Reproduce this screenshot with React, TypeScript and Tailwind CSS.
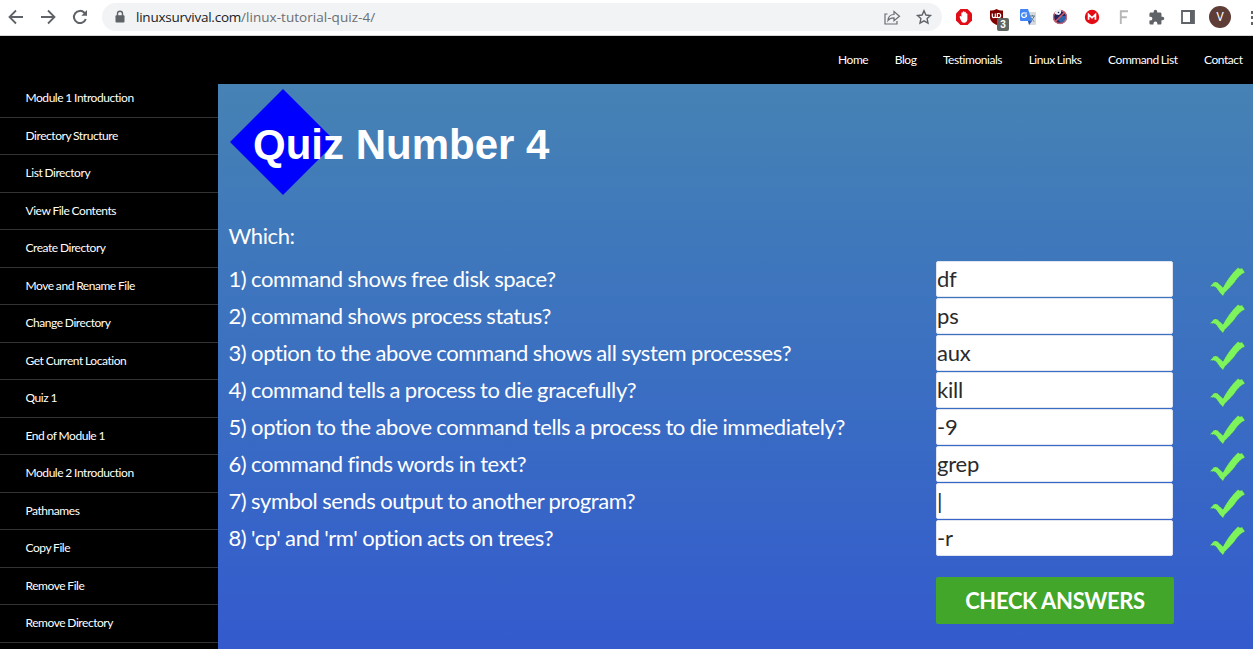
import React from "react";

const modules = [
  "Module 1 Introduction", "Directory Structure", "List Directory", "View File Contents",
  "Create Directory", "Move and Rename File", "Change Directory", "Get Current Location",
  "Quiz 1", "End of Module 1", "Module 2 Introduction", "Pathnames", "Copy File",
  "Remove File", "Remove Directory",
];

const links = ["Home", "Blog", "Testimonials", "Linux Links", "Command List", "Contact"];

const questions = [
  { text: "1) command shows free disk space?", answer: "df" },
  { text: "2) command shows process status?", answer: "ps" },
  { text: "3) option to the above command shows all system processes?", answer: "aux" },
  { text: "4) command tells a process to die gracefully?", answer: "kill" },
  { text: "5) option to the above command tells a process to die immediately?", answer: "-9" },
  { text: "6) command finds words in text?", answer: "grep" },
  { text: "7) symbol sends output to another program?", answer: "|" },
  { text: "8) 'cp' and 'rm' option acts on trees?", answer: "-r" },
];

function Slot({ children }: { children: React.ReactNode }) {
  return <div className="flex h-[34px] w-8 shrink-0 items-center justify-center">{children}</div>;
}

function Extensions() {
  return (
    <div className="ml-[6px] flex">
      <Slot>
        <svg width="18" height="18" viewBox="0 0 18 18">
          <path d="M5.500 1h7L17 5.500v7L12.500 17h-7L1 12.500v-7z" fill="#e10d17" />
          <path d="M4.900 8.200c.7-.3 1.200.2 1.500.8V5c0-1 1.400-1 1.400 0V3.900c0-1 1.600-1 1.600 0v.7c0-1 1.500-1 1.500 0V6c0-1 1.500-1 1.500 0v5c0 2-1 3.700-3.200 3.700-2.500 0-3.400-2-4.500-5.500-.1-.5-.1-.8.200-1z" fill="#fff" />
        </svg>
      </Slot>
      <Slot>
        <div className="relative left-px h-[18px] w-[18px]">
          <svg width="18" height="18" viewBox="0 0 18 18">
            <path d="M8.500 1c2 1 4 1.500 6.500 1.500V9c0 4-3 6-6.500 8-3.500-2-6.500-4-6.500-8V2.500C4.500 2.500 6.500 2 8.500 1z" fill="#800000" />
            <path d="M4.300 5.500v2.700c0 1.800 3 1.800 3 0V5.500M9.400 5.500v4h1.300c2.700 0 2.700-4 0-4zM7.300 9.500h2" fill="none" stroke="#fff" strokeWidth="1.200" />
          </svg>
          <span className="absolute top-[10px] left-[9px] flex h-[13px] w-[12px] items-center justify-center rounded-[2px] bg-[#5f6662] font-['Liberation_Sans'] text-[10px] font-bold text-white">3</span>
        </div>
      </Slot>
      <Slot>
        <svg width="18" height="18" viewBox="0 0 18 18">
          <path d="M7 4h9q1 0 1 1v11q0 1-1 1h-6z" fill="#d5d9e0" />
          <path d="M2 1h7l4 12H2q-1 0-1-1V2q0-1 1-1z" fill="#4285f4" />
          <path d="M10 17l3-4H9z" fill="#2456b8" />
          <path d="M8 5H5.800a2.300 2.300 0 1 0 .2 4.200Q7.800 8.600 7.600 7H5.800" fill="none" stroke="#fff" strokeWidth="1.200" />
          <path d="M11 8h5M13.500 7v1M15.200 8q-.8 3-3.400 4.800M12 9.500q1 2.500 3.300 4" fill="none" stroke="#607d8b" />
        </svg>
      </Slot>
      <Slot>
        <svg width="18" height="18" viewBox="0 0 18 18">
          <circle cx="9" cy="9" r="7" fill="#20245f" />
          <path d="M9 8l6 0-1 5-4 2-3-3z" fill="#2b64ad" />
          <circle cx="9" cy="9" r="6.500" fill="none" stroke="#cf6673" strokeWidth="1.300" />
          <path d="M13.800 4.200l-9.600 9.600" stroke="#d95761" strokeWidth="1.600" />
          <path d="M3.500 5l2-3 4.500 0 0 3-2 2-3-.5z" fill="#eef2f8" />
          <circle cx="7.500" cy="4.500" r=".8" fill="#252550" />
        </svg>
      </Slot>
      <Slot>
        <svg width="18" height="18" viewBox="0 0 18 18">
          <circle cx="9" cy="9" r="7.200" fill="#e50b14" />
          <path d="M5.600 11.800V6.500L9 9.800l3.400-3.300v5.300" fill="none" stroke="#fff" strokeWidth="1.700" />
        </svg>
      </Slot>
      <Slot>
        <svg width="18" height="18" viewBox="0 0 18 18">
          <path d="M5.800 16V3.200H13M5.800 9.300h6" fill="none" stroke="#b7b7b7" strokeWidth="1.900" />
        </svg>
      </Slot>
      <Slot>
        <svg width="17" height="17" viewBox="0 0 24 24" fill="#5f6368">
          <path d="M20.500 11H19V7c0-1.100-.9-2-2-2h-4V3.500a2.500 2.500 0 0 0-5 0V5H4c-1.100 0-2 .9-2 2v3.800h1.500a2.700 2.700 0 0 1 0 5.400H2V20c0 1.100.9 2 2 2h3.800v-1.500a2.700 2.700 0 0 1 5.400 0V22H17c1.100 0 2-.9 2-2v-4h1.500a2.500 2.500 0 0 0 0-5z" />
        </svg>
      </Slot>
      <Slot>
        <svg width="16" height="16" viewBox="0 0 16 16">
          <path d="M2 2h12v12H2z" fill="none" stroke="#5f6368" strokeWidth="1.800" />
          <path d="M10 2h4v12h-4z" fill="#5f6368" />
        </svg>
      </Slot>
      <Slot>
        <span className="flex h-[22px] w-[22px] shrink-0 items-center justify-center rounded-full bg-[#5d3d35] font-['Roboto'] text-[12px] text-white">V</span>
      </Slot>
      <div className="flex w-[17px] flex-col items-end justify-center gap-[2.500px]">
        <span className="h-[3px] w-[2px] bg-[#5f6368]" />
        <span className="h-[3px] w-[2px] bg-[#5f6368]" />
        <span className="h-[3px] w-[2px] bg-[#5f6368]" />
      </div>
    </div>
  );
}

function Toolbar() {
  return (
    <header className="flex h-9 shrink-0 border-b border-[#d5d6d8] bg-white">
      <div className="flex w-[102px] shrink-0 items-center gap-3 pl-[6px] pb-px">
        <svg width="20" height="20" viewBox="0 0 20 20" fill="none" stroke="#5f6368" strokeWidth="1.800"><path d="M17 10H4M10 3.500L3.500 10l6.500 6.500" /></svg>
        <svg width="20" height="20" viewBox="0 0 20 20" fill="none" stroke="#5f6368" strokeWidth="1.800"><path d="M3 10h13M10 3.500l6.500 6.500-6.500 6.500" /></svg>
        <svg width="20" height="20" viewBox="0 0 20 20" fill="none" stroke="#5f6368" strokeWidth="2"><path d="M15.800 12a6.100 6.100 0 1 1-1.400-6.300L16 7.300" /><path d="M17 3v5.700h-5.700z" fill="#5f6368" stroke="none" /></svg>
      </div>
      <div className="mt-[3px] flex h-7 w-[840px] shrink-0 items-center rounded-full bg-[#f1f3f4] pl-[12px] font-['Open_Sans'] text-[13.500px] text-[#6b6f73]">
        <svg width="12" height="14" viewBox="0 0 12 14" className="mr-[10px]"><path d="M3.500 6V3.700a2.500 2.500 0 0 1 5 0V6" fill="none" stroke="#5f6368" strokeWidth="1.400" /><rect x="1.500" y="5.200" width="9" height="7.300" rx="1" fill="#5f6368" /></svg>
        <span className="whitespace-nowrap"><span className="tracking-[-0.240px] text-[#202124]">linuxsurvival.com</span><span className="tracking-[0.040px]">/linux-tutorial-quiz-4/</span></span>
        <div className="mr-[9px] ml-auto flex gap-[14px]">
          <svg width="18" height="18" viewBox="0 0 18 18" fill="none" stroke="#6a6d72" strokeWidth="1.200"><path d="M4.500 6H2v10h12v-3M5 12.500c.3-4 2.800-6 6-6V3.500l5.500 4.700-5.500 4.600V9.900c-2.500 0-4.500.6-6 2.600z" /></svg>
          <svg width="18" height="18" viewBox="0 0 18 18" fill="none" stroke="#5f6368" strokeWidth="1.400"><path d="M9 2.800l1.900 4.200 4.600.5-3.400 3.100.9 4.500-4-2.300-4 2.300.9-4.500-3.400-3.100 4.600-.5z" /></svg>
        </div>
      </div>
      <Extensions />
    </header>
  );
}

function Check() {
  return (
    <svg width="38" height="30" viewBox="0 0 38 30" className="ml-[36px] mt-[5px]">
      <path d="M1 20.500L5 16l3 0 6 5.500Q20 10 29 1.500l2 1.200 2-.7L36 6.500Q30 9 25.500 16.500l-4.500 5-5 5-2 3.500-3-3-4-5.500-2-1z" fill="#7df45b" stroke="#356f68" strokeWidth=".5" strokeDasharray="1 1" />
    </svg>
  );
}

export default function App() {
  return (
    <div className="flex h-[649px] w-[1253px] flex-col overflow-hidden bg-black font-['Lato',sans-serif]">
      <Toolbar />
      <nav className="flex h-12 shrink-0 items-center justify-end gap-[26.500px] pr-[10.500px] text-[12px] tracking-[-0.450px] text-white [word-spacing:-0.600px]">
        {links.map((link) => <a key={link} className="whitespace-nowrap">{link}</a>)}
      </nav>
      <div className="flex min-h-0 flex-1">
        <aside className="w-[218px] shrink-0 overflow-hidden text-[12px] tracking-[-0.450px] text-white [word-spacing:-0.400px]">
          <ul className="-mt-[4px]">
            {modules.map((name) => (
              <li key={name} className="flex h-[37.500px] items-center border-b border-[#333] pl-[25.500px]">{name}</li>
            ))}
          </ul>
        </aside>
        <main className="flex min-w-0 flex-1 flex-col bg-linear-to-b from-[#4682b4] to-[#345acd] text-[22px] text-white">
          <div className="relative mt-[5px] ml-3 h-[106px] shrink-0">
            <svg width="106" height="106" viewBox="0 0 106 106"><path d="M53 0l53 53-53 53L0 53z" fill="#00f" /></svg>
            <h1 className="absolute top-[32px] left-[23px] font-['Liberation_Sans'] text-[42px] leading-[48px] font-bold whitespace-nowrap">Quiz Number 4</h1>
          </div>
          <p className="mt-[24px] ml-[10.500px] h-[33px] shrink-0 leading-[33px] tracking-[-0.400px]">Which:</p>
          <div className="mt-[9px] ml-[10.500px] flex shrink-0 flex-col">
            {questions.map((q) => (
              <div key={q.text} className="flex h-[37px]">
                <span className="w-[707.500px] shrink-0 leading-[35px] tracking-[-0.400px] whitespace-nowrap [word-spacing:-0.500px]">{q.text}</span>
                <span className="h-[36px] w-[237px] shrink-0 rounded-[2px] border border-[#e1e5f1] bg-white leading-[33px] tracking-[-0.200px] text-[#2b2b2b]">{q.answer}</span>
                <Check />
              </div>
            ))}
          </div>
          <button className="mt-[20px] ml-[718px] h-[47px] w-[238px] shrink-0 rounded-[2px] bg-[#41a62a] leading-[47px] font-bold tracking-[-0.350px]">CHECK ANSWERS</button>
        </main>
      </div>
    </div>
  );
}
